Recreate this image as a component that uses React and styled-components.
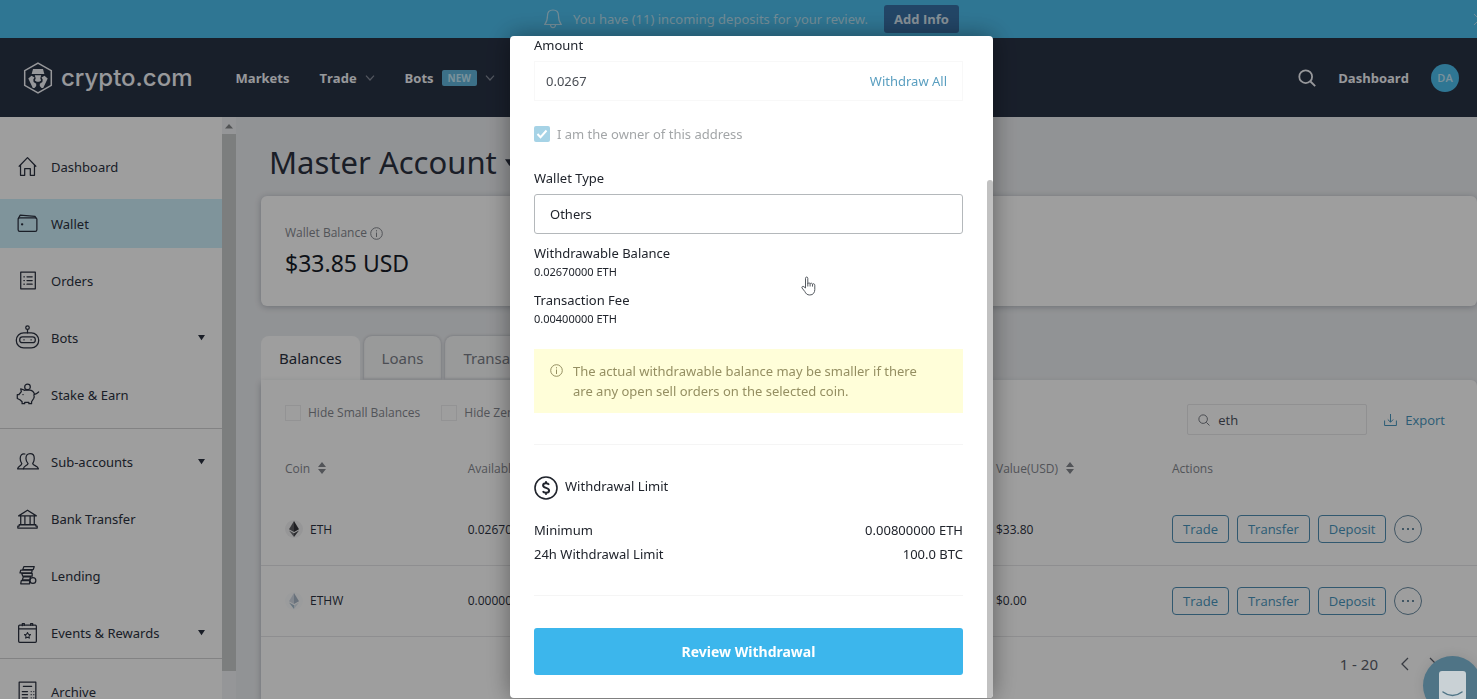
import React, { useState } from 'react'
import styled, { createGlobalStyle } from 'styled-components';

const GlobalStyle = createGlobalStyle`
    * {
        box-sizing: border-box;
    }

    body {
        margin: 0;
        overflow: hidden;
        font-family: "Noto Sans", sans-serif;
        font-size: 13px;
        color: #2b3140;
    }

    button, input, select {
        font-family: inherit;
        font-size: inherit;
        color: inherit;
    }

    button {
        cursor: pointer;
        padding: 0;
        border: none;
        background: none;
    }

    a {
        color: inherit;
        text-decoration: none;
    }

    h1, h2, p {
        margin: 0;
        font-weight: 400;
    }

    svg {
        display: block;
        flex: none;
    }
`

/* the page runs a little past the right edge of the window */
const Page = styled.div`
    width: calc(100% + 26px);
    height: 100vh;
    display: flex;
    flex-direction: column;
    overflow: hidden;
    background: #ebedf0;
`

const Banner = styled.div`
    flex: none;
    height: 38px;
    display: grid;
    grid-template-columns: 1fr auto 1fr;
    align-items: center;
    padding: 0 18px;
    background: #4dbeed;
    color: #b9e2f3;
`

const BannerText = styled.div`
    grid-column: 2;
    display: flex;
    align-items: center;

    span {
        margin: 0 16px 0 11px;
    }
`

const AddInfo = styled.button`
    width: 75px;
    height: 28px;
    border-radius: 3px;
    background: #3870a5;
    color: #d8e8f4;
    font-family: "Open Sans", sans-serif;
    font-weight: 700;
`

const BannerClose = styled.button`
    justify-self: end;
`

const TopBar = styled.header`
    flex: none;
    height: 79px;
    display: flex;
    align-items: center;
    justify-content: space-between;
    padding: 0 44px 0 23px;
    background: #283245;
    color: #f4f6fa;
    font-family: "Open Sans", sans-serif;
    font-weight: 700;
`

const Brand = styled.a`
    display: flex;
    align-items: center;
    gap: 8px;
    font-family: Inter, sans-serif;
    font-size: 24px;
    font-weight: 500;
`

const Nav = styled.nav`
    flex: 1;
    display: flex;
    align-items: center;
    gap: 30px;
    padding-left: 43px;

    a {
        display: flex;
        align-items: center;
        gap: 8px;
    }
`

const NewTag = styled.span`
    padding: 0 6px;
    border-radius: 2px;
    background: #62b5dc;
    color: #c5ebfb;
    font-size: 10px;
    line-height: 16px;
`

const UserMenu = styled.div`
    display: flex;
    align-items: center;
    gap: 22px;
`

const Avatar = styled.a`
    width: 28px;
    height: 28px;
    border-radius: 50%;
    background: #4dbeed;
    color: #c5ebfb;
    font-size: 11px;
    font-weight: 600;
    line-height: 28px;
    text-align: center;
`

const Content = styled.div`
    flex: 1;
    min-height: 0;
    display: flex;
`

const Sidebar = styled.aside`
    flex: none;
    width: 236px;
    display: flex;
    background: #fff;
`

const SideList = styled.nav`
    flex: 1;
    display: flex;
    flex-direction: column;
    padding-top: 25px;
    overflow: hidden;
`

const SideGroup = styled.div`
    flex: none;
    display: flex;
    flex-direction: column;
    gap: 8px;
`

const SideLine = styled.hr`
    flex: none;
    width: 100%;
    height: 1px;
    margin: ${props => props.$tight ? "1px" : "9px"} 0 8px;
    border: none;
    background: #d2d2d4;
`

const SideItem = styled.a`
    height: 49px;
    display: flex;
    align-items: center;
    padding: 0 17px 0 15px;
    background: ${props => props.$active ? "#ceeffa" : "transparent"};

    span {
        flex: 1;
        margin-left: 11px;
    }
`

const SideScroll = styled.div`
    width: 14px;
    display: flex;
    flex-direction: column;
    align-items: center;
    gap: 5px;
    padding: 7px 0 28px;
    background: #f1f3f6;
`

const SideThumb = styled.div`
    flex: 1;
    width: 14px;
    background: #c8cccb;
`

const Main = styled.main`
    flex: 1;
    min-width: 0;
    display: flex;
    flex-direction: column;
    padding: 22px 26px 0 25px;
`

const Title = styled.h1`
    display: flex;
    align-items: center;
    gap: 8px;
    margin: 0 0 11px 8px;
    font-size: 31px;
    line-height: 46px;
`

const BalanceCard = styled.section`
    height: 110px;
    padding: 28px 24px;
    border-radius: 6px;
    background: #fff;
    box-shadow: 0 1px 6px rgba(40, 50, 70, .3);
`

const BalanceLabel = styled.div`
    display: flex;
    align-items: center;
    gap: 3px;
    font-family: "Open Sans", sans-serif;
    font-size: 12px;
    line-height: 18px;
    color: #85888f;
`

const BalanceValue = styled.div`
    margin-top: 3px;
    font-size: 23px;
    line-height: 36px;
    color: #171c28;
`

const Tabs = styled.div`
    display: flex;
    gap: 4px;
    margin-top: 30px;
`

const Tab = styled.button`
    height: 44px;
    padding: 0 18px;
    border-radius: 8px 8px 0 0;
    font-size: 15px;
    background: ${props => props.$active ? "#fff" : "#f7f8f9"};
    color: ${props => props.$active ? "#2b3140" : "#7b7f88"};
    box-shadow: ${props => props.$active ? "none" : "0 0 3px rgba(40, 50, 70, .3), inset 0 -2px 2px #e0e2e5"};
`

const TableCard = styled.section`
    flex: 1;
    border-radius: 0 6px 0 0;
    background: #fff;
    box-shadow: 0 3px 6px rgba(40, 50, 70, .3);
    font-family: "Open Sans", sans-serif;
`

const Filters = styled.div`
    display: flex;
    align-items: flex-start;
    gap: 21px;
    padding: 24px 32px 0 24px;
`

const FilterCheck = styled.label`
    display: flex;
    align-items: center;
    gap: 7px;
    font-size: 12px;
    line-height: 18px;
    color: #85888f;

    input {
        appearance: none;
        width: 16px;
        height: 16px;
        margin: 0;
        border: 1px solid #ededef;
    }
`

const SearchBox = styled.label`
    width: 180px;
    height: 31px;
    display: flex;
    align-items: center;
    gap: 8px;
    margin-left: auto;
    padding: 0 10px;
    border: 1px solid #e8e8ea;
    border-radius: 2px;
    color: #777b84;

    input {
        flex: 1;
        min-width: 0;
        padding: 0;
        border: none;
        outline: none;
        background: none;
        color: #4a4f5b;
    }
`

const ExportButton = styled.button`
    display: flex;
    align-items: center;
    gap: 8px;
    height: 32px;
    margin-left: -4px;
    color: #4795bd;
`

const CoinTable = styled.table`
    width: 100%;
    table-layout: fixed;
    border-collapse: collapse;
    font-size: 12px;

    th, td {
        padding: 0;
        text-align: left;
        white-space: nowrap;
    }

    th {
        height: 58px;
        padding-top: 6px;
        font-weight: 400;
        color: #85888f;
    }

    td {
        height: 71px;
        border-bottom: 1px solid #e6e6e8;
    }

    th:first-child, td:first-child {
        width: 17%;
        padding-left: 24px;
    }

    th:nth-child(3) {
        width: 176px;
    }

    th:nth-child(4) {
        width: 305px;
    }
`

const Cell = styled.div`
    display: flex;
    align-items: center;
    gap: ${props => props.$gap}px;
`

const ActionButton = styled.button`
    height: 28px;
    padding: 0 10px;
    border: 1px solid #4f8fb4;
    border-radius: 4px;
    font-size: 13px;
    color: #4795bd;
`

const MoreButton = styled.button`
    width: 28px;
    height: 28px;
    display: flex;
    align-items: center;
    justify-content: center;
    border: 1px solid #6a8ba2;
    border-radius: 50%;
    color: #6a8ba2;
`

const Pager = styled.div`
    display: flex;
    align-items: center;
    justify-content: flex-end;
    gap: 20px;
    height: 55px;
    padding-right: 40px;
    font-family: "Noto Sans", sans-serif;
    font-size: 15px;
    color: #5b606b;

    span {
        margin-right: 3px;
    }
`

const Overlay = styled.div`
    position: fixed;
    top: 0;
    bottom: 0;
    left: 0;
    right: -26px;
    z-index: 5;
    display: flex;
    align-items: flex-start;
    justify-content: center;
    padding-top: 36px;
    background: rgba(0, 0, 0, .38);
`

const Modal = styled.div`
    width: 483px;
    display: flex;
    border-radius: 4px;
    overflow: hidden;
    background: #fff;
    color: #20242c;
    box-shadow: 0 0 24px rgba(0, 0, 0, .4);
`

const ModalBody = styled.form`
    flex: 1;
    display: flex;
    flex-direction: column;
    padding: 0 24px 23px;
`

const ModalScroll = styled.div`
    width: 6px;
    margin-top: 144px;
    border-radius: 3px 3px 0 0;
    background: #c1c1c1;
`

const FieldLabel = styled.label`
    line-height: 18px;
`

const AmountBox = styled.div`
    height: 40px;
    display: flex;
    align-items: center;
    margin-top: 7px;
    padding: 0 15px 0 11px;
    border: 1px solid #f8f8f8;
    color: #4a4e55;

    input {
        flex: 1;
        min-width: 0;
        padding: 0;
        border: none;
        outline: none;
    }

    button {
        color: #5a9fc0;
    }
`

const OwnerCheck = styled.label`
    display: flex;
    align-items: center;
    gap: 7px;
    margin: 23px 0 25px;
    line-height: 20px;
    color: #a3a6a8;

    input {
        appearance: none;
        width: 16px;
        height: 16px;
        margin: 0;
        border-radius: 2px;
        background: #a6d3e6;
    }

    svg {
        margin-left: -23px;
        pointer-events: none;
    }
`

const WalletSelect = styled.select`
    appearance: none;
    height: 40px;
    margin: 7px 0 9px;
    padding: 0 15px;
    border: 1px solid #b4b8bb;
    border-radius: 3px;
    background: #fff;
    color: #20242c;
`

const Fact = styled.div`
    margin-bottom: 9px;
    line-height: 20px;

    p {
        font-size: 11px;
        line-height: 18px;
    }
`

const Notice = styled.div`
    display: flex;
    gap: 10px;
    margin-top: 12px;
    padding: 12px 24px 12px 16px;
    background: #fffed9;
    color: #958f62;
    line-height: 20px;

    svg {
        margin-top: 3px;
    }
`

const Divider = styled.hr`
    width: 100%;
    height: 1px;
    margin: ${props => props.$top}px 0 31px;
    border: none;
    background: #f5f5f5;
`

const LimitTitle = styled.h2`
    display: flex;
    gap: 7px;
    margin-bottom: 18px;
    font-size: 13px;
    line-height: 21px;
`

const LimitRow = styled.div`
    display: flex;
    justify-content: space-between;
    line-height: 24px;
`

const ReviewButton = styled.button`
    height: 47px;
    margin-top: 1px;
    border-radius: 3px;
    background: #3cb6ec;
    color: #fff;
    font-size: 14px;
    font-weight: 700;
`

const HandCursor = styled.svg`
    position: fixed;
    top: 276px;
    left: 801px;
    z-index: 7;
`

const ChatButton = styled.button`
    position: fixed;
    right: -5px;
    bottom: -16px;
    z-index: 6;
    width: 59px;
    height: 59px;
    display: flex;
    align-items: center;
    justify-content: center;
    border-radius: 50%;
    background: #4f7486;
    box-shadow: 0 0 12px rgba(0, 0, 0, .1);
`

const LineIcon = ({ size = 24, children, width = 1.2 }) => (
    <svg width={size} height={size} viewBox="0 0 24 24" fill="none" stroke="currentColor"
        strokeWidth={width} strokeLinecap="round" strokeLinejoin="round">
        {children}
    </svg>
)

const icons = {
    home: <><path d="M4 11.800 12 3.500l8 8.300" /><path d="M5.300 10.800v9.700h4V14h5.400v6.500h4v-9.700" /></>,
    wallet: <><rect x="3" y="6.500" width="18" height="13" rx="1.500" /><path d="M3.200 7.200 5 4l14.200 1.200.8 1.300" /><path d="M6.700 12.800h.3" strokeWidth="2" /></>,
    orders: <><path d="M5.500 4h14v16h-14z" /><path d="M8.500 8.500h.5M8.500 12h.5M8.500 15.500h.5M11.500 8.500h5M11.500 12h5M11.500 15.500h5" /></>,
    bots: <><circle cx="12" cy="2.600" r="1.700" /><path d="M12 4.500v3" /><rect x="1.300" y="7.500" width="21.400" height="14.500" rx="7" /><rect x="4.500" y="11.500" width="15" height="5.500" rx="2.700" /><path d="M8.500 14.200h.3M15.300 14.200h.3" /></>,
    stake: <><circle cx="12" cy="4.700" r="2.700" /><path d="M9.500 8 5.500 6.500l.6 2.700-2.300 2.800H2.200v3.800l2.500 1.200 2.100 2v1.800h2.500V19.500h4v1.300h2.600V19l2-3.200c.7-1.300.6-2.600.2-3.600l2.400-1L22.700 9.500M14.500 7.700c2.300.4 3.700 2 4.300 4.200M7.600 12h.2M14.500 7.700h-5" /></>,
    people: <><path d="M14.500 4.500c3 0 4 2 4 4.500s-1 4-1.500 5c.3 2 5 2 5.500 5H8c.5-3 4-3 4.500-5-.8-1-2-2.500-2-5 0-2.700 1.300-4.500 4-4.500z" /><path d="M9.500 4.800c-3-.7-4.500 1.700-4.500 4.200s.8 3.500 1.500 5C6 16.500 3 16 2.500 19H8" /></>,
    bank: <><path d="M3.500 9.500 12 4l8.500 5.500zM5.500 9.800v8M9.500 9.800v8M14.500 9.800v8M18.500 9.800v8M4 18h16v1.200h1.300v2H2.700v-2H4z" /></>,
    lending: <><path d="M8.500 3.500h10l-1 2.800h-10zM5.500 6.800h11l-.5 2.700H4.800zM6.500 10h10v2.700h-9zM8 13.400h7l-1 2.800H7zM6 17h8v3H5.500z" /><circle cx="17.200" cy="16.800" r="2.800" /></>,
    events: <><rect x="3.500" y="5" width="17" height="16.500" rx="1" /><path d="M3.500 8.500h17M7 3.500h2M15 3.500h2M7 3.500v2M9 5V3.500M15 5V3.500M17 5V3.500" /><path d="m12 12 .9 1.700 2 .3-1.500 1.400.4 2-1.800-.9-1.800.9.4-2L9.100 14l2-.3z" strokeWidth="1" /></>,
    archive: <><path d="M4 3h16v20H4z" /><path d="M8 7h8M7 12h5M7 15h5M7 18h5M7 21h5M15.500 12h.1M15.500 15h.1M15.500 18h.1M18 12h.1M18 15h.1M18 18h.1" /></>,
}

const Caret = ({ size = 7 }) => (
    <svg width={size} height={size} viewBox="0 0 8 8" fill="currentColor"><path d="M0 1h8L4 7z" /></svg>
)

const ChevronDown = () => (
    <svg width="10" height="6" viewBox="0 0 10 6" fill="none" stroke="#868d9a" strokeWidth="1.200"><path d="M1 .7 5 5 9 .7" /></svg>
)

const SearchIcon = ({ size, width = 1.5 }) => (
    <svg width={size} height={size} viewBox="0 0 18 18" fill="none" stroke="currentColor" strokeWidth={width}>
        <circle cx="7.700" cy="7.700" r="6.400" /><path d="m12.500 12.500 4.700 4.700" />
    </svg>
)

const InfoIcon = () => (
    <svg width="13" height="13" viewBox="0 0 13 13" fill="none" stroke="currentColor">
        <circle cx="6.500" cy="6.500" r="5.800" /><path d="M6.500 5.500V10M6.500 3.200v1.200" />
    </svg>
)

const SortIcon = () => (
    <svg width="8" height="12" viewBox="0 0 8 12" fill="currentColor"><path d="M0 5h8L4 0zM0 7h8l-4 5z" /></svg>
)

const LionLogo = () => (
    <svg width="30" height="32" viewBox="0 0 30 32" fill="currentColor">
        <path d="M15 1.200 28.300 8.600v14.800L15 30.800 1.700 23.400V8.600z" fill="none" stroke="currentColor" strokeWidth="1.500" />
        <path d="M10 7h10l1.300 5H8.700z" />
        <path d="m5.300 16.500 3.200-2.800 3 1.700-1.200 2 .3 2.600 2.600 1.700v2.400L11.500 26H9.800z" />
        <path d="m24.700 16.500-3.200-2.800-3 1.700 1.200 2-.3 2.600-2.600 1.700v2.400l1.700 1.900h1.700z" />
        <path d="M11.800 13.200h6.400l-.9 3.100.8 2.300-1.900 1.200h-2.400l-1.900-1.200.8-2.300z" />
    </svg>
)

const EthIcon = ({ light }) => (
    <svg width="18" height="18" viewBox="0 0 18 18">
        <circle cx="9" cy="9" r="9" fill={light ? "#fbfcfd" : "#f3f3f4"} />
        <path d="M9 1 4 9.300 9 12z" fill={light ? "#d2dae6" : "#5c5d62"} />
        <path d="M9 1v11l5-2.700z" fill={light ? "#aab8c9" : "#34353a"} />
        <path d="m4 10.500 5 6.500v-3.800z" fill={light ? "#a4bccf" : "#6f7075"} />
        <path d="m14 10.500-5 6.500v-3.800z" fill={light ? "#dbe5ee" : "#45464b"} />
    </svg>
)

const mainMenu = [
    { name: "Dashboard", icon: "home" },
    { name: "Wallet", icon: "wallet" },
    { name: "Orders", icon: "orders" },
    { name: "Bots", icon: "bots", more: true },
    { name: "Stake & Earn", icon: "stake" },
]

const accountMenu = [
    { name: "Sub-accounts", icon: "people", more: true },
    { name: "Bank Transfer", icon: "bank" },
    { name: "Lending", icon: "lending" },
    { name: "Events & Rewards", icon: "events", more: true },
]

const coins = [
    { name: "ETH", available: "0.02670000", value: "$33.80" },
    { name: "ETHW", available: "0.00000000", value: "$0.00", light: true },
]

const Menu = ({ items }) => (
    <SideGroup>
        {items.map(item => (
            <SideItem href="#" key={item.name} $active={item.name === "Wallet"}>
                <LineIcon size={25}>{icons[item.icon]}</LineIcon>
                <span>{item.name}</span>
                {item.more && <Caret />}
            </SideItem>
        ))}
    </SideGroup>
)

const WithdrawModal = () => {

    const [amount, setAmount] = useState("0.0267");
    const [owner, setOwner] = useState(true);

    return (
        <Modal role="dialog" aria-label="Withdraw">
            <ModalBody onSubmit={(e) => e.preventDefault()}>
                <FieldLabel htmlFor="amount">Amount</FieldLabel>
                <AmountBox>
                    <input id="amount" value={amount} onChange={(e) => setAmount(e.target.value)} />
                    <button type="button">Withdraw All</button>
                </AmountBox>
                <OwnerCheck>
                    <input type="checkbox" checked={owner} onChange={() => setOwner(!owner)} />
                    <svg width="16" height="16" viewBox="0 0 16 16" fill="none" stroke="#fff" strokeWidth="2"><path d="m3.500 8 3 3.200 6-6.700" /></svg>
                    I am the owner of this address
                </OwnerCheck>
                <FieldLabel htmlFor="wallet-type">Wallet Type</FieldLabel>
                <WalletSelect id="wallet-type">
                    <option>Others</option>
                </WalletSelect>
                <Fact>Withdrawable Balance<p>0.02670000 ETH</p></Fact>
                <Fact>Transaction Fee<p>0.00400000 ETH</p></Fact>
                <Notice>
                    <InfoIcon />
                    <p>The actual withdrawable balance may be smaller if there are any open sell orders on the selected coin.</p>
                </Notice>
                <Divider $top={31} />
                <LimitTitle>
                    <svg width="24" height="24" viewBox="0 0 24 24" fill="none" stroke="currentColor" strokeWidth="1.600">
                        <circle cx="12" cy="12" r="11" />
                        <path d="M15 8.700c-.6-1-1.600-1.500-3-1.500-1.700 0-2.900.9-2.900 2.300 0 3.200 6 1.600 6 5 0 1.400-1.300 2.300-3.100 2.300-1.500 0-2.600-.5-3.200-1.600M12 5.200v2M12 16.800v2" strokeWidth="2" />
                    </svg>
                    Withdrawal Limit
                </LimitTitle>
                <LimitRow><span>Minimum</span><span>0.00800000 ETH</span></LimitRow>
                <LimitRow><span>24h Withdrawal Limit</span><span>100.0 BTC</span></LimitRow>
                <Divider $top={29} />
                <ReviewButton>Review Withdrawal</ReviewButton>
            </ModalBody>
            <ModalScroll />
        </Modal>
    )
}

const App = () => {

    const [search, setSearch] = useState("eth");

    return (
        <>
            <GlobalStyle />
            <Page>
                <Banner>
                    <BannerText>
                        <svg width="18" height="20" viewBox="0 0 18 20" fill="none" stroke="currentColor" strokeWidth="1.200">
                            <path d="M9 1c3.700 0 5.500 2.600 5.500 5.800 0 4.500 1 6.600 2.700 8.700H.8c1.700-2.100 2.700-4.200 2.700-8.700C3.500 3.600 5.300 1 9 1zM6.500 16c.3 1.800 1.200 2.700 2.500 2.700s2.200-.9 2.500-2.700" />
                        </svg>
                        <span>You have (11) incoming deposits for your review.</span>
                        <AddInfo>Add Info</AddInfo>
                    </BannerText>
                    <BannerClose aria-label="Close">
                        <svg width="11" height="11" viewBox="0 0 11 11" stroke="currentColor"><path d="m0 0 11 11M11 0 0 11" /></svg>
                    </BannerClose>
                </Banner>
                <TopBar>
                    <Brand href="#"><LionLogo />crypto.com</Brand>
                    <Nav>
                        <a href="#">Markets</a>
                        <a href="#">Trade <ChevronDown /></a>
                        <a href="#">Bots <NewTag>NEW</NewTag> <ChevronDown /></a>
                    </Nav>
                    <UserMenu>
                        <SearchIcon size={18} width={1.8} />
                        <a href="#">Dashboard</a>
                        <Avatar href="#">DA</Avatar>
                    </UserMenu>
                </TopBar>
                <Content>
                    <Sidebar>
                        <SideList>
                            <Menu items={mainMenu} />
                            <SideLine />
                            <Menu items={accountMenu} />
                            <SideLine $tight />
                            <Menu items={[{ name: "Archive", icon: "archive" }]} />
                        </SideList>
                        <SideScroll>
                            <svg width="8" height="5" viewBox="0 0 8 5" fill="#85888a"><path d="M4 0 8 4.500H0z" /></svg>
                            <SideThumb />
                        </SideScroll>
                    </Sidebar>
                    <Main>
                        <Title>Master Account <Caret size={9} /></Title>
                        <BalanceCard>
                            <BalanceLabel>Wallet Balance <InfoIcon /></BalanceLabel>
                            <BalanceValue>$33.85 USD</BalanceValue>
                        </BalanceCard>
                        <Tabs>
                            <Tab $active>Balances</Tab>
                            <Tab>Loans</Tab>
                            <Tab>Transactions</Tab>
                        </Tabs>
                        <TableCard>
                            <Filters>
                                <FilterCheck><input type="checkbox" />Hide Small Balances</FilterCheck>
                                <FilterCheck><input type="checkbox" />Hide Zero Balances</FilterCheck>
                                <SearchBox>
                                    <SearchIcon size={12} />
                                    <input aria-label="Search coin" value={search} onChange={(e) => setSearch(e.target.value)} />
                                </SearchBox>
                                <ExportButton>
                                    <svg width="13" height="12" viewBox="0 0 13 12" fill="none" stroke="currentColor"><path d="M.6 6.500v5h11.800v-5M6.500 0v8M3.800 5.500 6.500 8.200l2.700-2.700" /></svg>
                                    Export
                                </ExportButton>
                            </Filters>
                            <CoinTable>
                                <thead>
                                    <tr>
                                        <th><Cell $gap={8}>Coin <SortIcon /></Cell></th>
                                        <th>Available</th>
                                        <th><Cell $gap={8}>Value(USD) <SortIcon /></Cell></th>
                                        <th>Actions</th>
                                    </tr>
                                </thead>
                                <tbody>
                                    {coins.map(coin => (
                                        <tr key={coin.name}>
                                            <td><Cell $gap={7}><EthIcon light={coin.light} />{coin.name}</Cell></td>
                                            <td>{coin.available}</td>
                                            <td>{coin.value}</td>
                                            <td>
                                                <Cell $gap={8}>
                                                    <ActionButton>Trade</ActionButton>
                                                    <ActionButton>Transfer</ActionButton>
                                                    <ActionButton>Deposit</ActionButton>
                                                    <MoreButton aria-label="More">
                                                        <svg width="12" height="2" viewBox="0 0 12 2" fill="currentColor"><path d="M0 0h2v2H0zM5 0h2v2H5zM10 0h2v2h-2z" /></svg>
                                                    </MoreButton>
                                                </Cell>
                                            </td>
                                        </tr>
                                    ))}
                                </tbody>
                            </CoinTable>
                            <Pager>
                                <span>1 - 20</span>
                                <button aria-label="Previous">
                                    <svg width="8" height="14" viewBox="0 0 8 14" fill="none" stroke="currentColor" strokeWidth="1.300"><path d="M7 1 1 7l6 6" /></svg>
                                </button>
                                <button aria-label="Next">
                                    <svg width="8" height="14" viewBox="0 0 8 14" fill="none" stroke="currentColor" strokeWidth="1.300"><path d="m1 1 6 6-6 6" /></svg>
                                </button>
                            </Pager>
                        </TableCard>
                    </Main>
                </Content>
            </Page>
            <Overlay>
                <WithdrawModal />
            </Overlay>
            <HandCursor width="15" height="20" viewBox="0 0 15 20" fill="#fff" stroke="#555a60">
                <path d="M4.500 12V2.300c0-1.700 2.300-1.700 2.300 0V8c0-1.500 2.300-1.500 2.300.2 0-1.500 2.400-1.300 2.400.4 0-1.300 2.300-1.200 2.300.6v4.300c0 3-1.600 5.500-5 5.500-2.800 0-4-1.500-5-3.500L1 12c-.6-1.500 1-2.200 2-1.200z" />
                <path d="M6.800 8v2.500M9.100 8.200v2.300M11.500 8.600v2" />
            </HandCursor>
            <ChatButton aria-label="Chat">
                <svg width="27" height="30" viewBox="0 0 27 30" fill="none">
                    <rect width="27" height="30" rx="3" fill="#c9d1d5" />
                    <path d="M4 21c6 4.500 13 4.500 19 0" stroke="#4f7486" strokeWidth="1.500" strokeLinecap="round" />
                </svg>
            </ChatButton>
        </>
    );
}

export default App;
